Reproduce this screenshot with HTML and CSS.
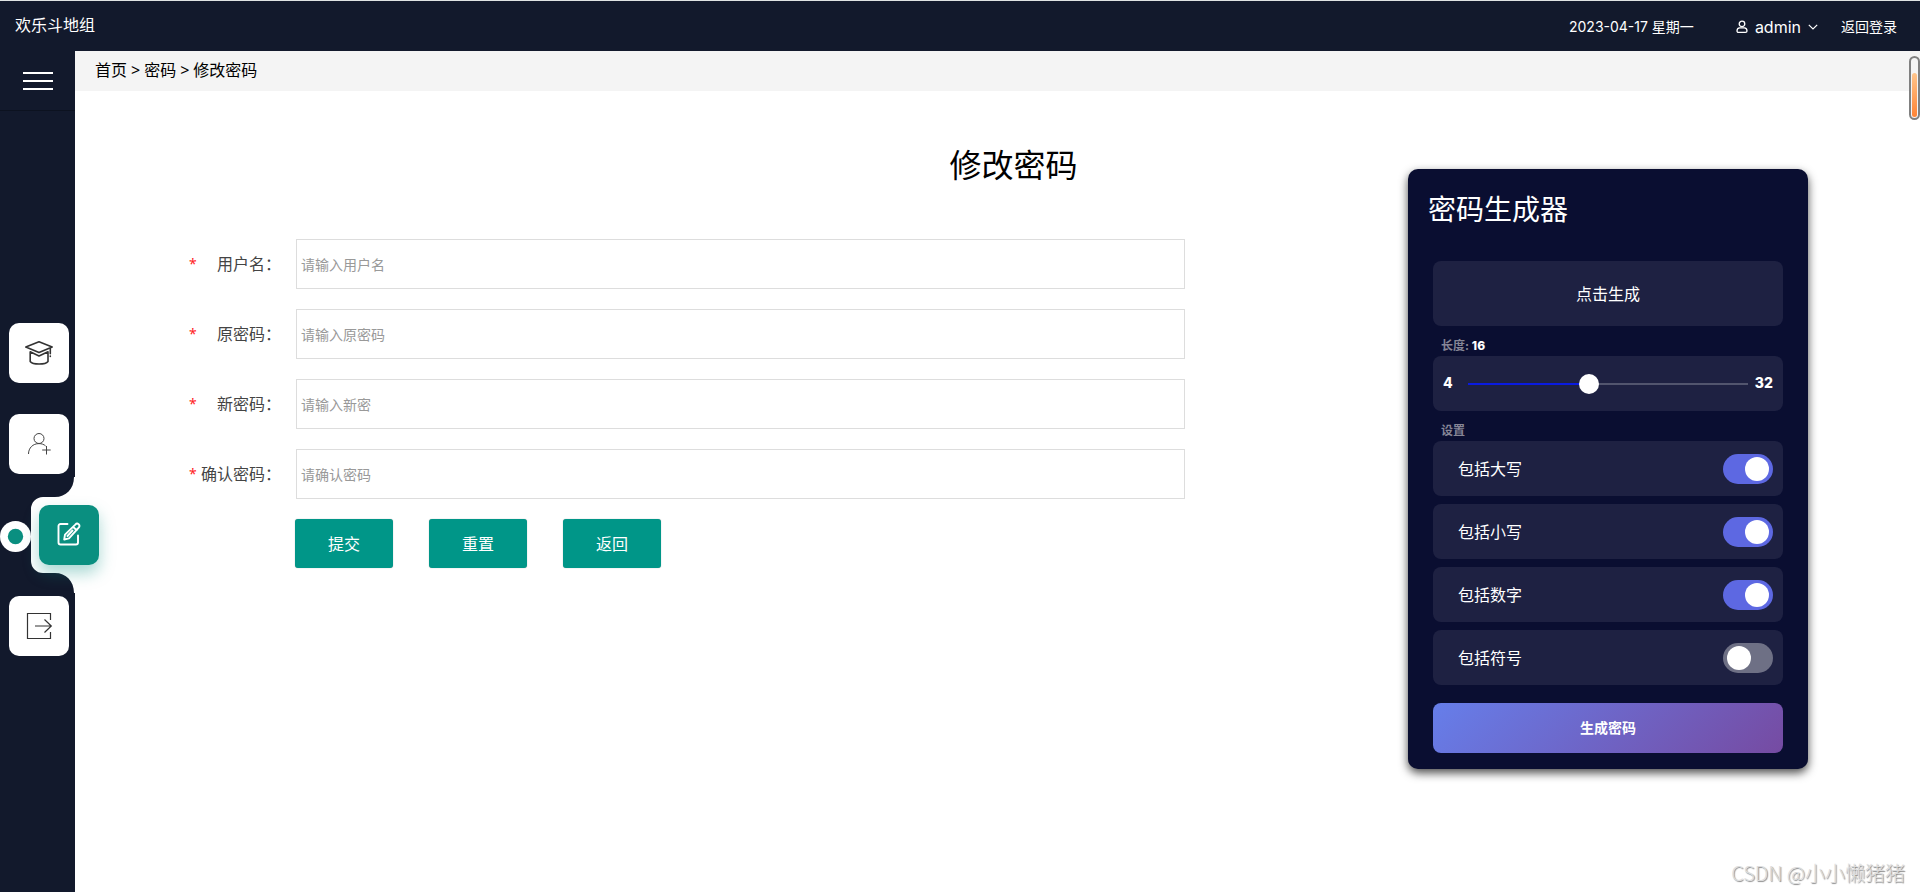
FILE: index.html
```html
<!DOCTYPE html>
<html lang="zh-CN">
<head>
<meta charset="utf-8">
<title>修改密码</title>
<link rel="stylesheet" href="styles.css">
</head>
<body>
<header class="topbar">
  <span class="brand">欢乐斗地组</span>
  <span class="date">2023-04-17 星期一</span>
  <button class="user" type="button">
    <svg class="user-icon" viewBox="0 0 12 14" width="12" height="14" fill="none" stroke="currentColor" stroke-width="1.3"><circle cx="6" cy="3.9" r="2.8"/><path d="M3.6 7.8h4.8c1.6 0 2.6 1.6 2.6 3.2 0 .9-.6 1.4-1.5 1.4h-7c-.9 0-1.5-.5-1.5-1.4 0-1.600 1-3.200 2.600-3.200z"/></svg>
    <span>admin</span>
    <svg class="chevron" viewBox="0 0 10 8" width="10" height="8" fill="none" stroke="currentColor" stroke-width="1.2"><path d="M.8 1.800 5 6l4.200-4.200"/></svg>
  </button>
  <a class="logout" href="#">返回登录</a>
</header>
<div class="shell">
  <aside class="sidebar">
    <button class="menu" type="button" aria-label="菜单"><i></i><i></i><i></i></button>
    <nav class="nav">
      <a class="item" href="#" aria-label="学习">
        <svg viewBox="0 0 30 26" width="30" height="26" fill="none" stroke="#333" stroke-width="1.6" stroke-linejoin="round" stroke-linecap="round"><path d="M1.800 7 15 1.700 28.200 7 15 12.600z"/><path d="M6.200 11.800v9.700c2.600 3.400 15.200 3.400 17.800 0v-9.700L15 15.900z"/><path d="M26.300 8.500v5.300M26.300 16v.5"/></svg>
      </a>
      <a class="item" href="#" aria-label="添加用户">
        <svg viewBox="0 0 24 24" width="24" height="24" fill="none" stroke="#444" stroke-width="1"><circle cx="12" cy="6.500" r="5"/><path d="M1.500 22c0-6 4.300-10.400 10.500-10.400 2.700 0 4.900.8 6.600 2.300M19.500 14v8.500M15.200 18h8.500"/></svg>
      </a>
      <a class="item active" href="#" aria-label="修改密码">
        <svg class="notch" viewBox="0 0 76 118" width="76" height="118"><path fill="#fff" d="M75 0H74C74 12 66 20 55 20H43A12 12 0 0 0 31 32V84A12 12 0 0 0 43 96H55C66 96 74 104 74 116H76V0z"/><circle cx="15.500" cy="59.500" r="15.500" fill="#fff"/><circle cx="15.500" cy="59.500" r="7.700" fill="#0a8f80"/></svg>
        <span class="tile">
          <svg viewBox="0 0 24 26" width="24" height="26" fill="none" stroke="#fff" stroke-width="1.900" stroke-linejoin="round" stroke-linecap="round"><path d="M10.500 2H3.500A2 2 0 0 0 1.500 4v16.500a2 2 0 0 0 2 2H19a2 2 0 0 0 2-2V13.500"/><path d="M18.300 2.600c1.100-1.200 2.300-1.200 3.300-.4 1.100 1 1.200 2.200.1 3.400L12 16.300l-4.800 1.200.8-4.900zM16.200 5l3.500 3.200M10.500 14l5-5.500"/></svg>
        </span>
      </a>
      <a class="item" href="#" aria-label="退出">
        <svg viewBox="0 0 28 28" width="28" height="28" fill="none" stroke="#333" stroke-width="1.200"><path d="M25.500 8V1.500h-23v25h23V20M10 14h16.500M19.500 7.500l6.800 6.500-6.800 6.500"/></svg>
      </a>
    </nav>
  </aside>
  <main class="main">
    <div class="crumbs"><a href="#">首页</a><span>&gt;</span><a href="#">密码</a><span>&gt;</span><a href="#">修改密码</a></div>
    <div class="content">
      <h1 class="title">修改密码</h1>
      <form class="form">
        <div class="row"><label for="user"><b>*</b>用户名：</label><input id="user" type="text" placeholder="请输入用户名"></div>
        <div class="row"><label for="old"><b>*</b>原密码：</label><input id="old" type="password" placeholder="请输入原密码"></div>
        <div class="row"><label for="new"><b>*</b>新密码：</label><input id="new" type="password" placeholder="请输入新密"></div>
        <div class="row"><label for="again"><b>*</b>确认密码：</label><input id="again" type="password" placeholder="请确认密码"></div>
        <div class="actions"><button type="submit">提交</button><button type="reset">重置</button><button type="button">返回</button></div>
      </form>
      <section class="card">
        <h2>密码生成器</h2>
        <div class="result">点击生成</div>
        <label class="caption" for="length">长度: <b>16</b></label>
        <div class="slider"><span>4</span><input id="length" type="range" min="4" max="32" value="16"><span>32</span></div>
        <div class="caption">设置</div>
        <div class="options">
          <label class="option">包括大写<input type="checkbox" checked></label>
          <label class="option">包括小写<input type="checkbox" checked></label>
          <label class="option">包括数字<input type="checkbox" checked></label>
          <label class="option">包括符号<input type="checkbox"></label>
        </div>
        <button class="generate" type="button">生成密码</button>
      </section>
    </div>
    <div class="scroll"><i></i></div>
    <div class="watermark">CSDN @小小懒猪猪</div>
  </main>
</div>
</body>
</html>
```
FILE: styles.css
```css
* { box-sizing: border-box; }
body {
  margin: 0;
  min-height: 100vh;
  display: flex;
  flex-direction: column;
  font: 16px/24px "Noto Sans", "Noto Sans CJK SC", sans-serif;
  color: #000;
  background: #fff;
}
a { color: inherit; text-decoration: none; }
button, input { font: inherit; }
button { border: 0; padding: 0; cursor: pointer; }
i { display: block; }

.topbar {
  height: 51px;
  display: flex;
  align-items: center;
  padding: 2px 23px 0 15px;
  border-top: 1px solid #dfe3e3;
  background: #12192c;
  color: #fff;
  font-family: Inter, "Noto Sans CJK SC", sans-serif;
  font-size: 14px;
}
.brand { font-size: 16px; padding-bottom: 4px; }
.date { margin-left: auto; font-size: 14px; }
.user {
  display: flex;
  align-items: center;
  gap: 7px;
  margin: 0 23px 0 42px;
  background: none;
  color: #fff;
  font-size: 16px;
}

.shell { flex: 1; display: flex; }
.sidebar { width: 75px; background: #12192c; display: flex; flex-direction: column; }
.menu {
  height: 60px;
  display: flex;
  flex-direction: column;
  align-items: center;
  justify-content: center;
  gap: 6px;
  background: none;
  border-bottom: 1px solid #0c1220;
}
.menu i { width: 30px; height: 2px; background: #fff; }
.nav {
  flex: 1;
  padding: 0 0 25px 9px;
  display: flex;
  flex-direction: column;
  justify-content: center;
  gap: 31px;
}
.item {
  width: 60px;
  height: 60px;
  border-radius: 10px;
  background: #fff;
  display: flex;
  align-items: center;
  justify-content: center;
  position: relative;
}
.item.active { background: none; }
.notch { position: absolute; left: -9px; top: -28px; }
.tile {
  position: absolute;
  left: 30px;
  top: 0;
  width: 60px;
  height: 60px;
  border-radius: 10px;
  background: #0a8f80;
  box-shadow: 0 8px 16px rgba(10, 143, 128, .35);
  display: flex;
  align-items: center;
  justify-content: center;
}

.main { flex: 1; min-width: 0; position: relative; }
.crumbs {
  height: 40px;
  padding: 7px 20px;
  display: flex;
  gap: 4px;
  background: #f4f4f4;
}
.content {
  display: grid;
  grid-template-columns: minmax(0, 1fr) 400px;
  grid-template-rows: auto 1fr;
  column-gap: 223px;
  align-items: start;
  padding: 52px 112px 40px 114px;
}
.title {
  grid-area: 1 / 1 / 2 / 3;
  margin: 0 0 52px;
  padding-left: 30px;
  text-align: center;
  font-size: 32px;
  line-height: 44px;
  font-weight: 400;
}
.form { grid-area: 2 / 1; display: flex; flex-direction: column; gap: 20px; }
.row { display: flex; align-items: center; gap: 15px; }
.row label { width: 92px; display: flex; justify-content: space-between; color: #444; }
.row b { color: #f22; font-weight: 400; font-size: 14px; }
.row input {
  flex: 1;
  height: 50px;
  min-width: 0;
  padding: 0 4px;
  border: 1px solid #ddd;
  background: #fff;
  font-size: 14px;
}
.row input::placeholder { color: #999; }
.actions { display: flex; gap: 36px; padding-left: 106px; }
.actions button {
  width: 98px;
  height: 49px;
  border-radius: 3px;
  background: #009688;
  box-shadow: 0 0 1px #999;
  color: #fff;
}

.card {
  grid-area: 1 / 2 / 3 / 3;
  margin-top: 26px;
  padding: 20px 25px 16px;
  border-radius: 10px;
  background: #0a0e31;
  box-shadow: 0 4px 10px rgba(0, 0, 0, .7);
  color: #fff;
  display: flex;
  flex-direction: column;
}
.card h2 { margin: 0 0 32px -5px; font-size: 28px; line-height: 40px; font-weight: 400; }
.result, .slider, .option { background: #1e2142; border-radius: 8px; }
.result { height: 65px; display: grid; place-items: center; }
.caption {
  margin-top: 10px;
  padding-left: 8px;
  font: 700 12px/20px Inter, "Noto Sans CJK SC", sans-serif;
  color: #868696;
}
.caption b { color: #fff; font-weight: 800; }
.slider {
  height: 55px;
  padding: 0 10px 2px;
  display: flex;
  align-items: center;
  justify-content: space-between;
  font: 800 14px/20px Inter, sans-serif;
}
.slider input {
  appearance: none;
  width: 280px;
  height: 2px;
  margin: 2px 0 0 8px;
  background: linear-gradient(90deg, #0a1be0 43%, #52556e 43%);
}
.slider input::-webkit-slider-thumb {
  appearance: none;
  width: 20px;
  height: 20px;
  border-radius: 50%;
  background: #fff;
}
.options { display: flex; flex-direction: column; gap: 8px; }
.option {
  height: 55px;
  padding: 0 10px 0 25px;
  display: flex;
  align-items: center;
  justify-content: space-between;
}
.option input {
  appearance: none;
  width: 50px;
  height: 30px;
  margin: 0;
  padding: 3px 4px;
  border-radius: 15px;
  background: #6e7085;
  display: flex;
}
.option input::before {
  content: "";
  width: 24px;
  height: 24px;
  border-radius: 50%;
  background: #fff;
}
.option input:checked { background: #5d68e2; justify-content: flex-end; }
.generate {
  height: 50px;
  margin-top: 18px;
  border-radius: 8px;
  background: linear-gradient(135deg, #667eea, #764ba2);
  color: #fff;
  font-size: 14px;
  font-weight: 700;
}

.scroll {
  position: absolute;
  top: 5px;
  right: 0;
  width: 11px;
  height: 64px;
  padding: 15px 1px 1px;
  border: 2px solid #808080;
  border-radius: 6px;
  background: #f4f4f4;
}
.scroll i { height: 100%; border-radius: 3px; background: linear-gradient(#ffc58c, #ff8435); }
.watermark {
  position: absolute;
  right: 15px;
  bottom: 7px;
  font: 300 20px/24px "Noto Sans CJK SC", sans-serif;
  color: #ddd;
  text-shadow: 1px 1px 1px #888;
}
```
